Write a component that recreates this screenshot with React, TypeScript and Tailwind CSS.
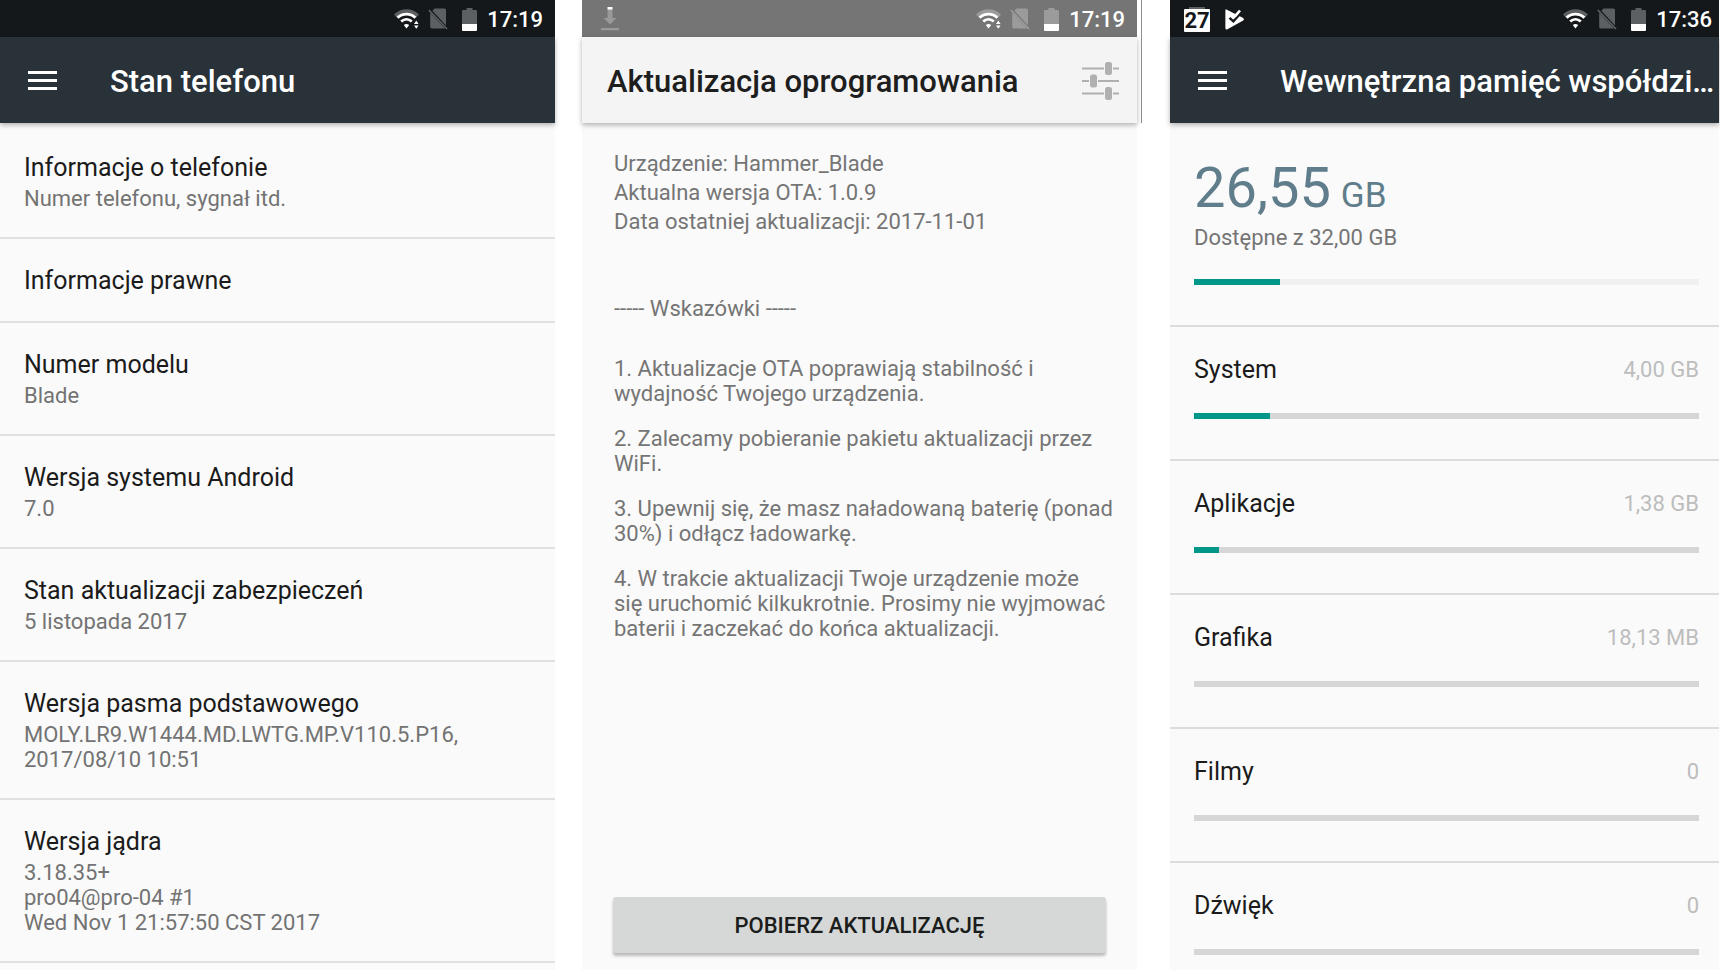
import type { ReactNode } from "react";

type Tone = "dark" | "gray";

function WifiIcon({ transfer, dim }: { transfer: boolean; dim: string }) {
  return (
    <svg width="25" height="20" viewBox="0 0 25 20" fill="none" aria-hidden="true">
      <path d="M0 5.6C7-1.6 18-1.6 25 5.6L22.2 8.6C16.6 3 8.4 3 2.8 8.6Z" fill={dim} />
      <path d="M3.6 8.7C8.6 3.9 16.4 3.9 21.4 8.7" stroke="#fff" strokeWidth="2.9" />
      <path d="M7.2 12.6C10.3 9.7 14.7 9.7 17.8 12.6" stroke="#fff" strokeWidth="2.8" />
      <path d="M9.8 16C11.4 14.6 13.6 14.6 15.2 16L12.5 19.4Z" fill="#fff" />
      {transfer && <path d="M20 15L22.3 11.6L24.6 15ZM20 16.4L22.3 19.8L24.6 16.4Z" fill="#fff" />}
    </svg>
  );
}

function NoSimIcon({ dim }: { dim: string }) {
  return (
    <svg width="20" height="22" viewBox="0 0 20 22" fill="none" aria-hidden="true">
      <path d="M6.6 0.5H16.5Q18 0.5 18 2V17.4L4.4 2.8Z" fill={dim} />
      <path d="M2.2 4.8L17 20.4H3.8Q2.2 20.4 2.2 18.8Z" fill={dim} />
      <path d="M0.8 2L19 21" stroke={dim} strokeWidth="1.7" />
    </svg>
  );
}

function BatteryIcon({ dim }: { dim: string }) {
  return (
    <svg width="15" height="23" viewBox="0 0 15 23" aria-hidden="true">
      <path d="M4.5 0H10.5V2H13.8Q15 2 15 3.2V16H0V3.2Q0 2 1.2 2H4.5Z" fill={dim} />
      <path d="M0 16H15V22Q15 23 14 23H1Q0 23 0 22Z" fill="#fff" />
    </svg>
  );
}

function DownloadIcon() {
  return (
    <svg width="18" height="24" viewBox="0 0 18 24" aria-hidden="true">
      <path d="M6.5 2H11.5V11H15.5L9 17.5L2.5 11H6.5Z" fill="#999" />
      <path d="M6.5 0H11.5V2.5H6.5Z" fill="#fff" />
      <path d="M0 21H18V23.2H0Z" fill="#999" />
    </svg>
  );
}

function CalendarIcon() {
  return (
    <span className="flex h-[25px] w-[26px] flex-col items-center">
      <span className="h-0.5 w-4 shrink-0 bg-[#5d6062]" />
      <span className="flex h-[23px] w-full items-center justify-center rounded-[1px] bg-white text-[22px] leading-[23px] font-bold text-[#14181b]">
        27
      </span>
    </span>
  );
}

function PlayCheckIcon() {
  return (
    <svg width="20" height="21" viewBox="0 0 20 21" fill="none" aria-hidden="true">
      <path d="M1.4 0.4L18.2 9Q19.8 10.2 18.2 11.6L2 20.4Q0.4 20.8 0.4 19V1.6Q0.4 0 1.4 0.4Z" fill="#fff" />
      <path d="M4.5 8.8L8.4 12.4L17 2.6" stroke="#14181b" strokeWidth="2.4" />
      <path d="M9.5 5.8L14 0.8L16 2.3L11.8 7.2L8.4 10.2L7.4 8.4Z" fill="#fff" />
    </svg>
  );
}

function TuneIcon() {
  return (
    <svg width="38" height="40" viewBox="0 0 38 40" fill="#b0b0b0" aria-hidden="true">
      <path d="M0 6.5H22V8.5H0ZM31 6.5H37V8.5H31ZM0 19H7V21H0ZM16 19H37V21H16ZM0 31.5H22V33.5H0ZM31 31.5H37V33.5H31Z" />
      <rect x="23" y="1" width="7" height="13" rx="2.5" />
      <rect x="8" y="13.5" width="7" height="13" rx="2.5" />
      <rect x="23" y="26" width="7" height="13" rx="2.5" />
    </svg>
  );
}

function StatusBar({
  time,
  tone = "dark",
  transfer = true,
  end = "pr-3",
  children,
}: {
  time: string;
  tone?: Tone;
  transfer?: boolean;
  end?: string;
  children?: ReactNode;
}) {
  const dim = tone === "dark" ? "#5d6062" : "#9b9b9b";
  return (
    <div className={`flex h-[37px] shrink-0 items-center pt-px ${end} ${tone === "dark" ? "bg-[#14181b]" : "bg-[#757575]"}`}>
      <div className="flex flex-1 items-center">{children}</div>
      <WifiIcon transfer={transfer} dim={dim} />
      <span className="ml-[9px]">
        <NoSimIcon dim={dim} />
      </span>
      <span className="mr-2.5 ml-3.5">
        <BatteryIcon dim={dim} />
      </span>
      <time className="pt-px text-[22px] leading-[35px] font-medium text-white">{time}</time>
    </div>
  );
}

function DarkToolbar({ title }: { title: string }) {
  return (
    <header className="relative flex h-[86px] shrink-0 items-center bg-[#283238] pl-7 shadow-[0_2px_5px_rgba(0,0,0,0.3)]">
      <button type="button" aria-label="Menu" className="flex w-[29px] shrink-0 flex-col gap-[5px]">
        <span className="h-[3px] bg-white" />
        <span className="h-[3px] bg-white" />
        <span className="h-[3px] bg-white" />
      </button>
      <h1 className="ml-[53px] pt-[3px] text-[31px] leading-9 font-medium whitespace-nowrap text-white">{title}</h1>
    </header>
  );
}

const phoneInfo: { title: string; lines: string[] }[] = [
  { title: "Informacje o telefonie", lines: ["Numer telefonu, sygnał itd."] },
  { title: "Informacje prawne", lines: [] },
  { title: "Numer modelu", lines: ["Blade"] },
  { title: "Wersja systemu Android", lines: ["7.0"] },
  { title: "Stan aktualizacji zabezpieczeń", lines: ["5 listopada 2017"] },
  { title: "Wersja pasma podstawowego", lines: ["MOLY.LR9.W1444.MD.LWTG.MP.V110.5.P16,", "2017/08/10 10:51"] },
  { title: "Wersja jądra", lines: ["3.18.35+", "pro04@pro-04 #1", "Wed Nov 1 21:57:50 CST 2017"] },
];

function PhoneStatus() {
  return (
    <section className="flex min-w-0 flex-[555] flex-col bg-[#fafafa]">
      <StatusBar time="17:19" />
      <DarkToolbar title="Stan telefonu" />
      <ul className="pt-[3px]">
        {phoneInfo.map(({ title, lines }) => (
          <li key={title} className="border-b-2 border-[#e0e0e0] pt-[27px] pb-[26px] pl-6">
            <h2 className="text-[25px] leading-[29px] text-[#1b1b1b]">{title}</h2>
            {lines.length > 0 && (
              <div className="pt-1 text-[22px] leading-[25px] text-[#737373]">
                {lines.map((line) => (
                  <p key={line}>{line}</p>
                ))}
              </div>
            )}
          </li>
        ))}
      </ul>
    </section>
  );
}

const hints = [
  ["1. Aktualizacje OTA poprawiają stabilność i", "wydajność Twojego urządzenia."],
  ["2. Zalecamy pobieranie pakietu aktualizacji przez", "WiFi."],
  ["3. Upewnij się, że masz naładowaną baterię (ponad", "30%) i odłącz ładowarkę."],
  [
    "4. W trakcie aktualizacji Twoje urządzenie może",
    "się uruchomić kilkukrotnie. Prosimy nie wyjmować",
    "baterii i zaczekać do końca aktualizacji.",
  ],
];

function SoftwareUpdate() {
  return (
    <section className="ml-[27px] flex min-w-0 flex-[555] flex-col bg-[#fafafa]">
      <StatusBar time="17:19" tone="gray">
        <span className="ml-[19px]">
          <DownloadIcon />
        </span>
      </StatusBar>
      <header className="relative flex h-[86px] shrink-0 items-center justify-between bg-[#f4f4f4] pt-0.5 pr-[17px] pl-[25px] shadow-[0_2px_5px_rgba(0,0,0,0.3)]">
        <h1 className="pt-px text-[31px] leading-9 font-medium whitespace-nowrap text-[#1e1e1e]">Aktualizacja oprogramowania</h1>
        <button type="button" aria-label="Ustawienia">
          <TuneIcon />
        </button>
      </header>
      <div className="flex flex-1 flex-col px-[31px] pt-[26px] pb-[17px] text-[22px] whitespace-nowrap text-[#757575]">
        <div className="pl-px">
          <div className="leading-[29px]">
            <p>Urządzenie: Hammer_Blade</p>
            <p>Aktualna wersja OTA: 1.0.9</p>
            <p>Data ostatniej aktualizacji: 2017-11-01</p>
          </div>
          <p className="pt-[58px] leading-[29px]">----- Wskazówki -----</p>
          <ol className="flex flex-col gap-5 pt-[33px] leading-[25px]">
            {hints.map((lines) => (
              <li key={lines[0]}>
                {lines.map((line) => (
                  <p key={line}>{line}</p>
                ))}
              </li>
            ))}
          </ol>
        </div>
        <button
          type="button"
          className="mt-auto h-14 rounded-[3px] bg-[#d6d8d7] text-[22px] font-medium text-[#1b1d1c] shadow-[0_3px_3px_rgba(0,0,0,0.25)]"
        >
          POBIERZ AKTUALIZACJĘ
        </button>
      </div>
    </section>
  );
}

const categories = [
  { name: "System", size: "4,00 GB", used: 15 },
  { name: "Aplikacje", size: "1,38 GB", used: 5 },
  { name: "Grafika", size: "18,13 MB", used: 0 },
  { name: "Filmy", size: "0", used: 0 },
  { name: "Dźwięk", size: "0", used: 0 },
];

function UsageBar({ label, used, track }: { label: string; used: number; track: string }) {
  return (
    <div role="progressbar" aria-label={label} aria-valuenow={used} className={`h-1.5 ${track}`}>
      <div className="h-full bg-[#009688]" style={{ width: `${used}%` }} />
    </div>
  );
}

function Storage() {
  return (
    <section className="ml-7 flex min-w-0 flex-[549] flex-col bg-[#fafafa]">
      <StatusBar time="17:36" transfer={false} end="pr-[7px]">
        <span className="ml-3.5">
          <CalendarIcon />
        </span>
        <span className="ml-[15px]">
          <PlayCheckIcon />
        </span>
      </StatusBar>
      <DarkToolbar title="Wewnętrzna pamięć współdzi…" />
      <div className="border-b-2 border-[#dcdcdc] pt-[35px] pr-5 pb-10 pl-6">
        <p className="text-[56px] leading-[60px] text-[#607d8b]">
          26,55 <span className="-ml-1 text-[35px] leading-none">GB</span>
        </p>
        <p className="pt-[7px] pb-7 text-[22px] leading-[26px] text-[#757575]">Dostępne z 32,00 GB</p>
        <UsageBar label="Zajęte miejsce" used={17} track="bg-[#f0f0f0]" />
      </div>
      <ul>
        {categories.map(({ name, size, used }) => (
          <li key={name} className="border-b-2 border-[#dcdcdc] pt-7 pr-5 pb-10 pl-6">
            <div className="flex items-center justify-between pb-[29px]">
              <h2 className="text-[25px] leading-[29px] text-[#1b1b1b]">{name}</h2>
              <span className="text-[22px] leading-[29px] text-[#bdbdbd]">{size}</span>
            </div>
            <UsageBar label={name} used={used} track="bg-[#d6d6d6]" />
          </li>
        ))}
      </ul>
    </section>
  );
}

export default function App() {
  return (
    <main className="flex h-screen overflow-hidden bg-white pr-px font-['Roboto',sans-serif]">
      <PhoneStatus />
      <SoftwareUpdate />
      <div className="ml-1 h-[123px] w-px shrink-0 bg-[#8f8f8f]" />
      <Storage />
    </main>
  );
}
